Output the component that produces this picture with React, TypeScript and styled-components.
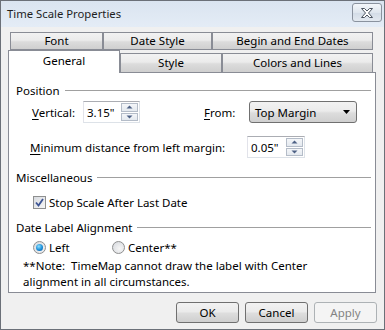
import React from 'react';
import styled, { createGlobalStyle } from 'styled-components';

const Global = createGlobalStyle`
  html, body { margin: 0; padding: 0; background: #f0f0f0; }
  body { font-family: "Noto Sans", "Open Sans", sans-serif; font-size: 11.5px; color: #000; }
  * { box-sizing: border-box; }
`;

const Window = styled.div`
  width: 385px;
  height: 330px;
  display: flex;
  flex-direction: column;
  border: 1px solid #6b7078;
  background: #f0f0f0;
  overflow: hidden;
`;

const TitleBar = styled.div`
  height: 26px;
  flex: none;
  display: flex;
  align-items: flex-start;
  justify-content: space-between;
  padding: 2px 2px 0 6px;
  background: linear-gradient(#dae4f0, #e4ecf6);
`;

const Title = styled.div`
  line-height: 22px;
  font-size: 11.3px;
  color: #1e1e1e;
`;

const CloseButton = styled.div`
  width: 30px;
  height: 19px;
  border: 1px solid #8a929e;
  border-radius: 3px;
  background: linear-gradient(#f3f6fa, #dfe6ee 50%, #d2dbe6 51%, #e3e9f0);
  display: flex;
  align-items: center;
  justify-content: center;
`;

const Body = styled.div`
  flex: 1;
  display: flex;
  flex-direction: column;
  padding: 5px 0 0 7px;
`;

const TabRow = styled.div<{ $front?: boolean }>`
  display: flex;
  align-items: flex-end;
  height: ${(p) => (p.$front ? 22 : 18)}px;
  padding-left: ${(p) => (p.$front ? 0 : 2)}px;
  position: relative;
  z-index: ${(p) => (p.$front ? 2 : 1)};
`;

const Tab = styled.div<{ $w: number; $selected?: boolean; $front?: boolean }>`
  width: ${(p) => p.$w}px;
  height: ${(p) => (p.$selected ? 23 : p.$front ? 19 : 18)}px;
  margin-bottom: ${(p) => (p.$selected ? -1 : 0)}px;
  border: 1px solid #898c95;
  border-bottom: ${(p) => (p.$front ? 'none' : '1px solid #898c95')};
  background: ${(p) =>
    p.$selected ? '#ffffff' : 'linear-gradient(#f2f2f2, #ebebeb 45%, #dcdcdc 55%, #cfcfcf)'};
  display: flex;
  justify-content: center;
  align-items: ${(p) => (p.$selected ? 'flex-start' : 'center')};
  padding-top: ${(p) => (p.$selected ? 2 : 0)}px;
  line-height: 16px;
  color: #000;
`;

const Panel = styled.div`
  width: 368px;
  height: 221px;
  flex: none;
  border: 1px solid #898c95;
  background: #fff;
  display: flex;
  flex-direction: column;
  padding: 10px 4px 0 7px;
`;

const GroupHeader = styled.div<{ $mt: number }>`
  display: flex;
  align-items: center;
  gap: 5px;
  height: 14px;
  margin-top: ${(p) => p.$mt}px;
  color: #000;
  &::after {
    content: '';
    flex: 1;
    height: 1px;
    background: #a0a0a0;
  }
`;

const FieldRow = styled.div<{ $mt: number; $indent: number }>`
  display: flex;
  align-items: center;
  height: 22px;
  margin-top: ${(p) => p.$mt}px;
  padding-left: ${(p) => p.$indent}px;
`;

const Label = styled.span<{ $w: number; $ml?: number }>`
  width: ${(p) => p.$w}px;
  margin-left: ${(p) => p.$ml ?? 0}px;
  flex: none;
  white-space: nowrap;
`;

const U = styled.span`
  text-decoration: underline;
  text-underline-offset: 2px;
`;

const SpinBox = styled.div<{ $w: number }>`
  width: ${(p) => p.$w}px;
  height: 22px;
  flex: none;
  border: 1px solid #dde2e8;
  border-top-color: #abadb3;
  border-left-color: #e2e3ea;
  display: flex;
  align-items: center;
  padding: 1px 1px 1px 3px;
  background: #fff;
`;

const SpinText = styled.span`
  flex: 1;
`;

const Spinner = styled.div`
  width: 17px;
  height: 18px;
  display: flex;
  flex-direction: column;
  gap: 1px;
`;

const SpinHalf = styled.div`
  flex: 1;
  border: 1px solid #b4bcc8;
  background: linear-gradient(#f4f6f9, #e4e9ef);
  display: flex;
  align-items: center;
  justify-content: center;
`;

const Combo = styled.div`
  width: 108px;
  height: 22px;
  flex: none;
  border: 1px solid #707070;
  border-radius: 3px;
  background: linear-gradient(#f2f2f2, #ebebeb 45%, #dddddd 55%, #cfcfcf);
  display: flex;
  align-items: center;
  justify-content: space-between;
  padding: 0 6px 0 5px;
`;

const CheckRow = styled.div<{ $mt: number }>`
  display: flex;
  align-items: center;
  height: 14px;
  margin-top: ${(p) => p.$mt}px;
  padding-left: 17px;
`;

const Choice = styled.label<{ $w?: number }>`
  display: flex;
  align-items: center;
  gap: 3px;
  width: ${(p) => (p.$w ? `${p.$w}px` : 'auto')};
  flex: none;
`;

const CheckBox = styled.span`
  width: 13px;
  height: 13px;
  border: 1px solid #8e8f8f;
  background: linear-gradient(135deg, #d8dbe0, #f6f6f6);
  display: flex;
  align-items: center;
  justify-content: center;
  flex: none;
`;

const Radio = styled.span<{ $on?: boolean }>`
  width: 13px;
  height: 13px;
  border-radius: 50%;
  border: 1px solid #8e8f8f;
  background: radial-gradient(circle at 60% 60%, #f6f6f6, #d4d7dc);
  display: flex;
  align-items: center;
  justify-content: center;
  flex: none;
  &::after {
    content: '';
    display: ${(p) => (p.$on ? 'block' : 'none')};
    width: 7px;
    height: 7px;
    border-radius: 50%;
    background: radial-gradient(circle at 40% 35%, #8ee0ff, #1a8ed8 55%, #0b4f9a);
  }
`;

const Note = styled.div`
  margin-top: 4px;
  padding-left: 7px;
  line-height: 16px;
`;

const ButtonRow = styled.div`
  display: flex;
  justify-content: flex-end;
  gap: 6px;
  margin-top: 9px;
  padding-right: 7px;
`;

const Button = styled.div<{ $disabled?: boolean }>`
  width: 63px;
  height: 21px;
  border: 1px solid ${(p) => (p.$disabled ? '#adb2b5' : '#707070')};
  border-radius: 3px;
  background: ${(p) =>
    p.$disabled ? '#f4f4f4' : 'linear-gradient(#f2f2f2, #ebebeb 45%, #dddddd 55%, #cfcfcf)'};
  color: ${(p) => (p.$disabled ? '#838383' : '#000')};
  display: flex;
  align-items: center;
  justify-content: center;
`;

const Arrow = ({ up }: { up?: boolean }) => (
  <svg width="7" height="4" viewBox="0 0 7 4">
    <path d={up ? 'M0.5 3.5 L3.5 0.5 L6.5 3.5 Z' : 'M0.5 0.5 L3.5 3.5 L6.5 0.5 Z'} fill="#4d6185" />
  </svg>
);

const Spin = ({ value, w }: { value: string; w: number }) => (
  <SpinBox $w={w}>
    <SpinText>{value}</SpinText>
    <Spinner>
      <SpinHalf>
        <Arrow up />
      </SpinHalf>
      <SpinHalf>
        <Arrow />
      </SpinHalf>
    </Spinner>
  </SpinBox>
);

export default function App() {
  return (
    <>
      <Global />
      <Window>
        <TitleBar>
          <Title>Time Scale Properties</Title>
          <CloseButton>
            <svg width="14" height="12" viewBox="0 0 14 12">
              <path
                d="M1.5 1.5 H4.5 L7 4 L9.5 1.5 H12.5 L8.5 6 L12.5 10.5 H9.5 L7 8 L4.5 10.5 H1.5 L5.5 6 Z"
                fill="#fff"
                stroke="#4c5561"
                strokeWidth="1"
                strokeLinejoin="round"
              />
            </svg>
          </CloseButton>
        </TitleBar>
        <Body>
          <TabRow>
            <Tab $w={93}>Font</Tab>
            <Tab $w={109}>Date Style</Tab>
            <Tab $w={161}>Begin and End Dates</Tab>
          </TabRow>
          <TabRow $front>
            <Tab $w={112} $front $selected>
              General
            </Tab>
            <Tab $w={102} $front>
              Style
            </Tab>
            <Tab $w={151} $front>
              Colors and Lines
            </Tab>
          </TabRow>
          <Panel>
            <GroupHeader $mt={0}>Position</GroupHeader>
            <FieldRow $mt={4} $indent={16}>
              <Label $w={51}>
                <U>V</U>ertical:
              </Label>
              <Spin value={'3.15"'} w={57} />
              <Label $w={45} $ml={64}>
                <U>F</U>rom:
              </Label>
              <Combo>
                <span>Top Margin</span>
                <svg width="7" height="4" viewBox="0 0 7 4">
                  <path d="M0 0 H7 L3.5 4 Z" fill="#000" />
                </svg>
              </Combo>
            </FieldRow>
            <FieldRow $mt={13} $indent={14}>
              <Label $w={217}>
                <U>M</U>inimum distance from left margin:
              </Label>
              <Spin value={'0.05"'} w={58} />
            </FieldRow>
            <GroupHeader $mt={12}>Miscellaneous</GroupHeader>
            <CheckRow $mt={11}>
              <Choice>
                <CheckBox>
                  <svg width="9" height="9" viewBox="0 0 9 9">
                    <path d="M1 4.5 L3.5 7.5 L8 1" fill="none" stroke="#3c5494" strokeWidth="1.8" />
                  </svg>
                </CheckBox>
                Stop Scale After Last Date
              </Choice>
            </CheckRow>
            <GroupHeader $mt={11}>Date Label Alignment</GroupHeader>
            <CheckRow $mt={6}>
              <Choice $w={79}>
                <Radio $on />
                Left
              </Choice>
              <Choice>
                <Radio />
                Center**
              </Choice>
            </CheckRow>
            <Note>
              **Note:&nbsp; TimeMap cannot draw the label with Center
              <br />
              alignment in all circumstances.
            </Note>
          </Panel>
          <ButtonRow>
            <Button>OK</Button>
            <Button>Cancel</Button>
            <Button $disabled>Apply</Button>
          </ButtonRow>
        </Body>
      </Window>
    </>
  );
}
